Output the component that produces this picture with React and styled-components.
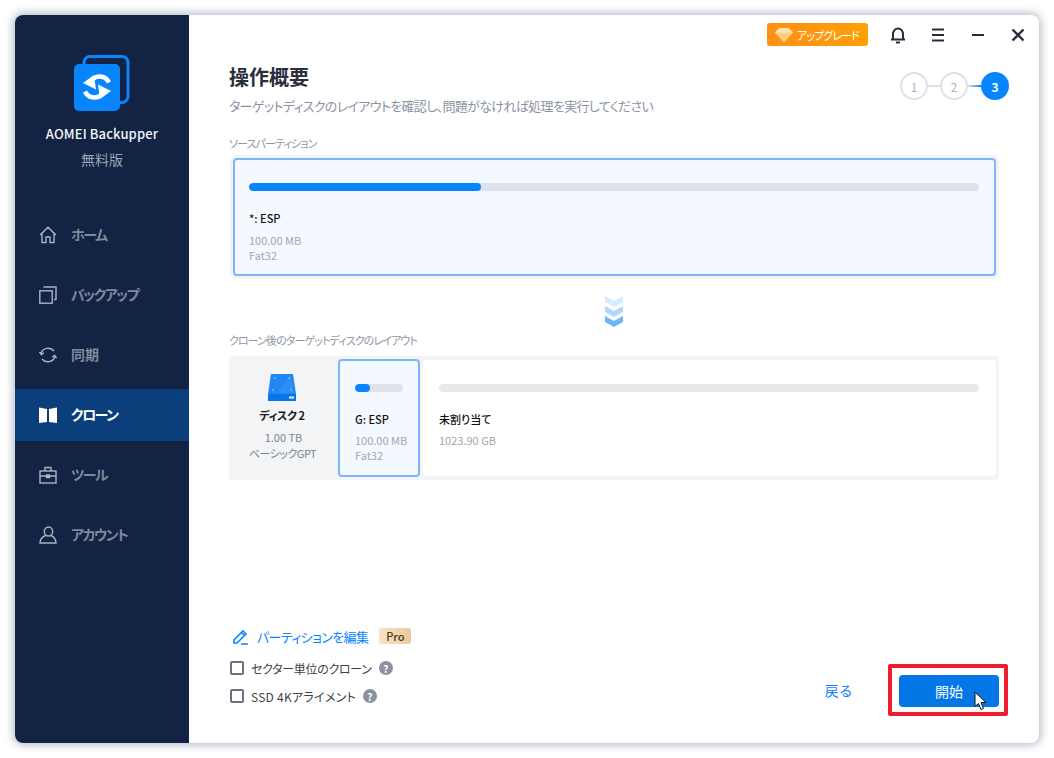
import React from "react";
import styled, { createGlobalStyle } from "styled-components";

const Global = createGlobalStyle`
  html, body {
    margin: 0;
    height: 758px;
    background: #fff;
    overflow: hidden;
  }
  * {
    box-sizing: border-box;
  }
  body {
    font-family: "Noto Sans CJK JP", "Noto Sans", sans-serif;
    font-feature-settings: "palt";
  }
`;

const Page = styled.div`
  width: 1054px;
  height: 758px;
  padding: 15px;
`;

const Window = styled.div`
  width: 1024px;
  height: 728px;
  display: flex;
  border-radius: 8px;
  overflow: hidden;
  background: #fff;
  box-shadow: 0 0 8px 2px rgba(70, 85, 115, 0.4);
`;

const Sidebar = styled.aside`
  width: 174px;
  background: #132343;
  display: flex;
  flex-direction: column;
  align-items: stretch;
  padding-top: 40px;
`;

const Logo = styled.div`
  align-self: center;
  height: 56px;
`;

const AppName = styled.div`
  margin-top: 13px;
  text-align: center;
  color: #f1f4f8;
  font-size: 13px;
  font-weight: 500;
  line-height: 20px;
  letter-spacing: 0.12px;
`;

const Edition = styled.div`
  margin-top: 5px;
  text-align: center;
  color: #98a3b5;
  font-size: 14px;
  line-height: 20px;
`;

const Nav = styled.nav`
  margin-top: 40px;
  display: flex;
  flex-direction: column;
  gap: 8px;
`;

const NavItem = styled.div`
  height: 52px;
  display: flex;
  align-items: center;
  gap: 14px;
  padding-left: 24px;
  font-size: 14px;
  font-weight: 700;
  letter-spacing: ${(p) => (p.$kanji ? 0 : -1.5)}px;
  color: ${(p) => (p.$active ? "#fff" : "#7e899c")};
  background: ${(p) => (p.$active ? "#0b3f7c" : "transparent")};

  span {
    margin-top: -2px;
  }

  svg {
    flex: none;
    width: 18px;
    height: 18px;
    fill: none;
    stroke: ${(p) => (p.$active ? "#fff" : "#aab3c2")};
    stroke-width: 1.4;
  }
`;

const Main = styled.main`
  flex: 1;
  display: flex;
  flex-direction: column;
  padding: 0 40px 27px;
`;

const TopBar = styled.div`
  height: 40px;
  padding-top: 8px;
  margin-right: -39px;
  display: flex;
  align-items: flex-start;
  justify-content: flex-end;
`;

const Upgrade = styled.div`
  width: 101px;
  height: 23px;
  margin-right: 10px;
  padding-left: 8px;
  border-radius: 3px;
  background: linear-gradient(90deg, #ff8f15, #ffa006);
  color: #fff;
  font-size: 11px;
  letter-spacing: -0.9px;
  display: flex;
  align-items: center;
  gap: 4px;
`;

const WinButton = styled.button`
  width: 40px;
  height: 23px;
  padding: 0;
  border: 0;
  background: none;
  display: flex;
  align-items: center;
  justify-content: center;

  svg {
    width: 18px;
    height: 18px;
    fill: none;
    stroke: #2a2c3c;
    stroke-width: 2;
  }
`;

const Header = styled.header`
  display: flex;
  justify-content: space-between;
  align-items: flex-start;
  padding-top: 7px;
`;

const Title = styled.h1`
  margin: 0;
  font-size: 20px;
  font-weight: 700;
  line-height: 30px;
  color: #2b2d3a;
`;

const Subtitle = styled.p`
  margin: 4px 0 0;
  font-size: 13px;
  line-height: 20px;
  letter-spacing: -0.65px;
  color: #8b93a3;
`;

const Steps = styled.div`
  display: flex;
  align-items: center;
  margin: 10px -10px 0 0;
`;

const Step = styled.div`
  width: 28px;
  height: 28px;
  border-radius: 50%;
  border: 2px solid ${(p) => (p.$on ? "#0785fd" : "#dde2ea")};
  background: ${(p) => (p.$on ? "#0785fd" : "#fff")};
  color: ${(p) => (p.$on ? "#fff" : "#aab2c0")};
  font-size: 12px;
  font-weight: ${(p) => (p.$on ? 700 : 400)};
  display: flex;
  align-items: center;
  justify-content: center;
`;

const StepLine = styled.div`
  width: ${(p) => (p.$on ? 13 : 12)}px;
  height: 2px;
  background: ${(p) => (p.$on ? "linear-gradient(90deg, #dde2ea, #0785fd)" : "#dde2ea")};
`;

const Label = styled.div`
  font-size: 11px;
  line-height: 18px;
  letter-spacing: -0.9px;
  color: #8f96a4;
`;

const SourceLabel = styled(Label)`
  margin-top: 18px;
`;

const TargetLabel = styled(Label)`
  margin-top: 4px;
`;

const SourceCard = styled.section`
  margin: 6px 3px 0 4px;
  height: 118px;
  padding: 23px 15px 0 14px;
  border: 2px solid #7db6fb;
  border-radius: 4px;
  background: #f3f9ff;
  box-shadow: 0 0 0 3px #f1f3f6;
`;

const Track = styled.div`
  height: 8px;
  border-radius: 4px;
  background: ${(p) => p.$bg || "#dfe2ea"};
  overflow: hidden;

  div {
    height: 100%;
    border-radius: 4px;
    background: #0785fd;
  }
`;

const PartName = styled.div`
  margin-top: 17px;
  font-size: 11px;
  font-weight: 500;
  line-height: 20px;
  color: #111;
`;

const PartInfo = styled.div`
  margin-top: ${(p) => p.$top || 5}px;
  font-size: 11px;
  line-height: 15px;
  white-space: nowrap;
  color: #a2a6b0;
`;

const Arrows = styled.div`
  margin-top: 20px;
  height: 31px;
  display: flex;
  justify-content: center;
`;

const TargetPanel = styled.section`
  margin-top: 7px;
  height: 124px;
  padding: 3px;
  border-radius: 4px;
  background: #f3f4f6;
  display: flex;
  align-items: stretch;
`;

const DiskInfo = styled.div`
  width: 109px;
  flex: none;
  display: flex;
  flex-direction: column;
  align-items: center;
  padding-top: 14px;
  margin-left: -3px;
  font-size: 11px;
  line-height: 16px;
  color: #7e8490;

  svg {
    margin-left: -3px;
  }
`;

const DiskName = styled.div`
  margin: 0 0 4px -3px;
  font-size: 11px;
  font-weight: 700;
  line-height: 20px;
  letter-spacing: -0.4px;
  color: #16181f;
`;

const DiskType = styled.div`
  margin-left: -2px;
  letter-spacing: -0.5px;
`;

const TargetPart = styled.div`
  width: 82px;
  flex: none;
  padding: 23px 15px 0;
  border: 2px solid #7db6fb;
  border-radius: 4px;
  background: #f3f9ff;
`;

const Unallocated = styled.div`
  flex: 1;
  margin: 1px 0 1px 3px;
  padding: 24px 17px 0 16px;
  border-radius: 4px;
  background: #fff;
`;

const Bottom = styled.footer`
  margin-top: auto;
  display: flex;
  justify-content: space-between;
  align-items: flex-end;
`;

const Options = styled.div`
  display: flex;
  flex-direction: column;
  margin-bottom: 6px;
`;

const EditLink = styled.div`
  display: flex;
  align-items: center;
  height: 22px;
  font-size: 13px;
  letter-spacing: -0.6px;
  color: #0a84ff;

  svg {
    margin: 0 8px 0 3px;
    width: 17px;
    height: 17px;
    fill: none;
    stroke: #0a84ff;
    stroke-width: 1.6;
  }
`;

const ProBadge = styled.span`
  margin-left: 11px;
  width: 32px;
  height: 16px;
  border-radius: 3px;
  background: linear-gradient(90deg, #f7e3c9, #ecc99c);
  color: #4d3a25;
  font-size: 11px;
  font-weight: 500;
  letter-spacing: 0;
  display: flex;
  align-items: center;
  justify-content: center;
`;

const Option = styled.label`
  height: 28px;
  display: flex;
  align-items: center;
  font-size: 12px;
  letter-spacing: 0.25px;
  color: #3c3f4a;
`;

const OptionTop = styled(Option)`
  margin-top: 7px;
  letter-spacing: -0.3px;
`;

const Box = styled.span`
  width: 14px;
  height: 14px;
  margin: 0 7px 0 1px;
  border: 2px solid #6c7280;
  border-radius: 2px;
  background: #fff;
`;

const Help = styled.span`
  width: 14px;
  height: 14px;
  margin-left: 7px;
  border-radius: 50%;
  background: #8b919e;
  color: #fff;
  font-size: 10px;
  font-weight: 700;
  display: flex;
  align-items: center;
  justify-content: center;
`;

const Actions = styled.div`
  display: flex;
  align-items: center;
`;

const Back = styled.button`
  padding: 0;
  border: 0;
  background: none;
  color: #0a84ff;
  font: inherit;
  font-size: 14px;
  letter-spacing: 1px;
  margin-right: 35px;
`;

const Highlight = styled.div`
  position: relative;
  width: 120px;
  height: 52px;
  margin-right: -9px;
  border: 4px solid #ee1c2e;
  border-radius: 2px;
  padding: 7px 5px 0 7px;
`;

const StartButton = styled.button`
  width: 100px;
  height: 32px;
  padding: 0;
  border: 0;
  border-radius: 4px;
  background: #0477e6;
  color: #fff;
  font: inherit;
  font-size: 14px;
`;

const Cursor = styled.svg`
  position: absolute;
  left: 82px;
  top: 23px;
`;

const LogoIcon = () => (
  <svg width="56" height="56" viewBox="0 0 56 56">
    <rect x="10" y="1.5" width="44" height="46" rx="6" fill="none" stroke="#0b85fb" strokeWidth="3" />
    <rect x="0" y="9" width="46" height="47" rx="5" fill="#0785fd" />
    <path d="M35 27.5 C32 21 24 19.5 18 24.5" fill="none" stroke="#fff" strokeWidth="4.5" />
    <path d="M9 28 L20 20 L22 34.5 Z" fill="#fff" />
    <path d="M11 36.5 C14 43 22 44.5 28 39.5" fill="none" stroke="#fff" strokeWidth="4.5" />
    <path d="M37 36 L26 44 L24 29.5 Z" fill="#fff" />
  </svg>
);

const Home = () => (
  <svg viewBox="0 0 18 18">
    <path d="M1 9 L9 1.2 L17 9 M3 7.5 V16.5 H7 V11 H11 V16.5 H15 V7.5" />
  </svg>
);
const Copy = () => (
  <svg viewBox="0 0 18 18">
    <rect x="0.8" y="4.8" width="12.4" height="12.4" />
    <path d="M4.5 1 H17 V13.5 H15" />
  </svg>
);
const Sync = () => (
  <svg viewBox="0 0 18 18">
    <path d="M2 7.5 A7.5 7.5 0 0 1 15 5 M16 10.5 A7.5 7.5 0 0 1 3 13" />
    <path d="M0.5 6 L2.2 8.5 L4.8 6.8 M17.5 12 L15.8 9.5 L13.2 11.2" />
  </svg>
);
const CloneIcon = () => (
  <svg viewBox="0 0 18 18">
    <path d="M0 1.5 L8 3 V16 L0 17 Z M18 1.5 L10 3 V16 L18 17 Z" fill="#fff" stroke="none" />
  </svg>
);
const Tool = () => (
  <svg viewBox="0 0 18 18">
    <rect x="1" y="5" width="16" height="12" />
    <path d="M6 5 V1.5 H12 V5 M1 10 H17 M7.5 9 H10.5 V11.5 H7.5 Z" />
  </svg>
);
const User = () => (
  <svg viewBox="0 0 18 18">
    <ellipse cx="9.5" cy="5.5" rx="4.2" ry="4.5" />
    <path d="M6.5 9.5 C3 11 1 13 1 17 H17 C17 13 15 11 12 9.5" />
  </svg>
);

const navItems = [
  { label: "ホーム", icon: <Home /> },
  { label: "バックアップ", icon: <Copy /> },
  { label: "同期", icon: <Sync />, kanji: true },
  { label: "クローン", icon: <CloneIcon />, active: true },
  { label: "ツール", icon: <Tool /> },
  { label: "アカウント", icon: <User /> },
];

const Chevrons = () => (
  <svg width="20" height="31" viewBox="0 0 20 31">
    <path d="M1 0 L10 5 L19 0 V6 L10 11 L1 6 Z" fill="#d6ebff" />
    <path d="M1 10 L10 15 L19 10 V16 L10 21 L1 16 Z" fill="#b0d8ff" />
    <path d="M1 20 L10 25 L19 20 V26 L10 31 L1 26 Z" fill="#6cb6fd" />
  </svg>
);

const Disk = () => (
  <svg width="32" height="32" viewBox="0 0 32 32">
    <path d="M5 1 H27 L30 21 V28 H2 V21 Z" fill="#1e86f5" />
    <path d="M2 21 H30 V28 H2 Z" fill="#0a74ea" />
    <path d="M10 20 L25 3 L28 20 Z" fill="#3b97f7" opacity="0.5" />
    <rect x="23" y="23.5" width="5" height="2" fill="#e7f2ff" />
    <circle cx="9" cy="5" r="1" fill="#7fbcfb" />
    <circle cx="23" cy="5" r="1" fill="#7fbcfb" />
    <circle cx="7" cy="17" r="1" fill="#7fbcfb" />
    <circle cx="25" cy="17" r="1" fill="#7fbcfb" />
  </svg>
);

export default function App() {
  return (
    <Page>
      <Global />
      <Window>
        <Sidebar>
          <Logo>
            <LogoIcon />
          </Logo>
          <AppName>AOMEI Backupper</AppName>
          <Edition>無料版</Edition>
          <Nav>
            {navItems.map((item) => (
              <NavItem key={item.label} $active={item.active} $kanji={item.kanji}>
                {item.icon}
                <span>{item.label}</span>
              </NavItem>
            ))}
          </Nav>
        </Sidebar>
        <Main>
          <TopBar>
            <Upgrade>
              <svg width="18" height="15" viewBox="0 0 18 15">
                <path d="M4 1 H14 L18 5.5 L9 15 L0 5.5 Z" fill="#ffe3b0" />
                <path d="M0 5.5 H18 L9 15 Z" fill="#ffcf85" />
              </svg>
              アップグレード
            </Upgrade>
            <WinButton>
              <svg viewBox="0 0 18 18">
                <path d="M2 13.5 H16 M4 13 V8 A5 5.5 0 0 1 14 8 V13 M7 16.5 H11" />
              </svg>
            </WinButton>
            <WinButton>
              <svg viewBox="0 0 18 18">
                <path d="M3 3.5 H15 M3 9 H15 M3 14.5 H15" />
              </svg>
            </WinButton>
            <WinButton>
              <svg viewBox="0 0 18 18">
                <path d="M3 9 H15" />
              </svg>
            </WinButton>
            <WinButton>
              <svg viewBox="0 0 18 18">
                <path d="M3.5 3.5 L14.5 14.5 M14.5 3.5 L3.5 14.5" strokeWidth="2.4" />
              </svg>
            </WinButton>
          </TopBar>
          <Header>
            <div>
              <Title>操作概要</Title>
              <Subtitle>ターゲットディスクのレイアウトを確認し、問題がなければ処理を実行してください</Subtitle>
            </div>
            <Steps>
              <Step>1</Step>
              <StepLine />
              <Step>2</Step>
              <StepLine $on />
              <Step $on>3</Step>
            </Steps>
          </Header>
          <SourceLabel>ソースパーティション</SourceLabel>
          <SourceCard>
            <Track>
              <div style={{ width: "31.8%" }} />
            </Track>
            <PartName>*: ESP</PartName>
            <PartInfo>
              100.00 MB
              <br />
              Fat32
            </PartInfo>
          </SourceCard>
          <Arrows>
            <Chevrons />
          </Arrows>
          <TargetLabel>クローン後のターゲットディスクのレイアウト</TargetLabel>
          <TargetPanel>
            <DiskInfo>
              <Disk />
              <DiskName>ディスク 2</DiskName>
              <div>1.00 TB</div>
              <DiskType>ベーシックGPT</DiskType>
            </DiskInfo>
            <TargetPart>
              <Track>
                <div style={{ width: "31%" }} />
              </Track>
              <PartName>G: ESP</PartName>
              <PartInfo $top={4}>
                100.00 MB
                <br />
                Fat32
              </PartInfo>
            </TargetPart>
            <Unallocated>
              <Track $bg="#e8e9eb" />
              <PartName>未割り当て</PartName>
              <PartInfo $top={4}>1023.90 GB</PartInfo>
            </Unallocated>
          </TargetPanel>
          <Bottom>
            <Options>
              <EditLink>
                <svg viewBox="0 0 17 17">
                  <path d="M2 12 L11 3 L14 6 L5 15 H2 Z M9.5 4.5 L12.5 7.5 M9 16 H16" />
                </svg>
                パーティションを編集
                <ProBadge>Pro</ProBadge>
              </EditLink>
              <OptionTop>
                <Box />
                セクター単位のクローン
                <Help>?</Help>
              </OptionTop>
              <Option>
                <Box />
                SSD 4Kアライメント
                <Help>?</Help>
              </Option>
            </Options>
            <Actions>
              <Back>戻る</Back>
              <Highlight>
                <StartButton>開始</StartButton>
                <Cursor width="15" height="20" viewBox="0 0 15 20">
                  <path d="M1 1 V15.5 L4.5 12.5 L7 18.5 L9.5 17.5 L7 11.5 H12 Z" fill="#fff" stroke="#111" strokeWidth="1" />
                </Cursor>
              </Highlight>
            </Actions>
          </Bottom>
        </Main>
      </Window>
    </Page>
  );
}
